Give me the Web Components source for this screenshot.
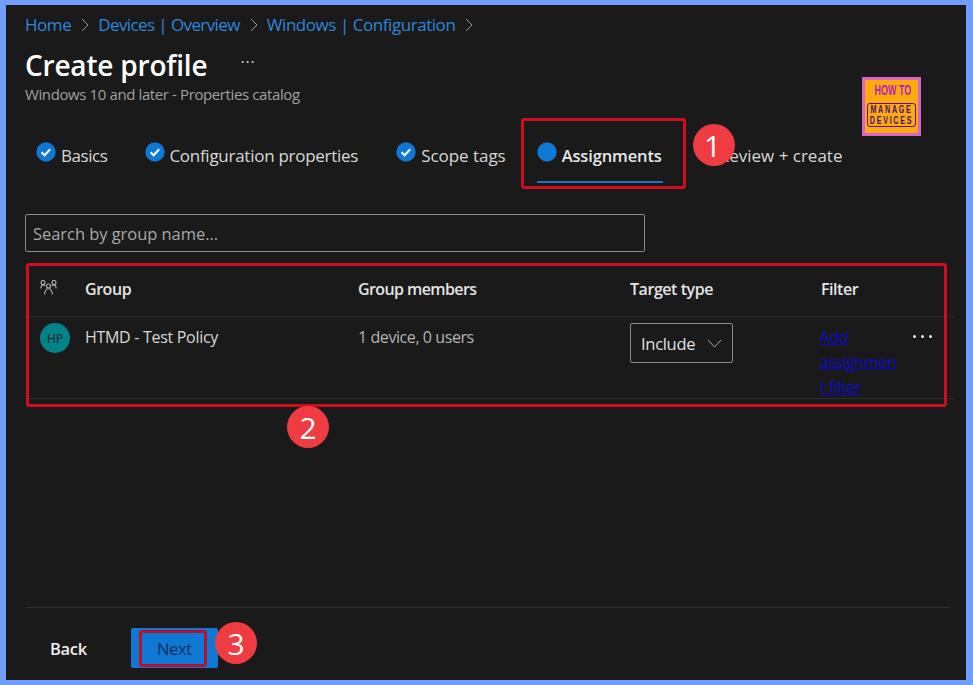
<!DOCTYPE html>
<html lang="en"><head><meta charset="utf-8"><title>Create profile</title>
<style>
html,body{margin:0;padding:0;height:100%}
body{background:#1a1a1a;font-family:"Open Sans","Noto Sans","Liberation Sans",sans-serif;overflow:hidden}
</style></head><body>
<app-frame>
  <crumb-bar></crumb-bar>
  <page-title title-text="Create profile" sub="Windows 10 and later - Properties catalog"></page-title>
  <wizard-tabs></wizard-tabs>
  <search-box placeholder="Search by group name..."></search-box>
  <assign-table></assign-table>
  <wizard-footer></wizard-footer>
  <brand-logo></brand-logo>
  <red-box style="left:521px;top:118px;width:165px;height:71px"></red-box>
  <red-box style="left:26px;top:263px;width:921px;height:144px"></red-box>
  <red-box style="left:139px;top:630px;width:68px;height:37px;border-color:#b4122f"></red-box>
  <step-badge style="left:693px;top:124px;padding-right:3px">1</step-badge>
  <step-badge style="left:287px;top:406px">2</step-badge>
  <step-badge style="left:215px;top:622px">3</step-badge>
</app-frame>
<script>
const T=(html)=>{const t=document.createElement('template');t.innerHTML=html;return t};
const def=(name,html,init)=>{const t=T(html);customElements.define(name,class extends HTMLElement{
  constructor(){super();this.attachShadow({mode:'open'}).appendChild(t.content.cloneNode(true));}
  connectedCallback(){init&&init(this,this.shadowRoot)}
})};

def('app-frame',`<style>
:host{display:flex;flex-direction:column;box-sizing:border-box;width:973px;height:685px;position:relative;
 border:solid #719dff;border-width:5px 7px 5px 6px;background:#1a1a1a;color:#e6e6e6;overflow:hidden}
::slotted(red-box),::slotted(step-badge),::slotted(brand-logo){margin:-5px 0 0 -6px}
</style><slot></slot>`);

def('crumb-bar',`<style>
:host{display:flex;align-items:center;padding:7px 0 0 19px;height:24px;font-size:17px;letter-spacing:-.45px;color:#2f86dc}
svg{width:10px;height:14px;margin:1px 8px 0 9px;fill:none;stroke:#9a9a9a;stroke-width:1}
</style>
<span>Home</span><svg viewBox="0 0 10 14"><path d="M2 1l6 6-6 6"/></svg>
<span style="letter-spacing:-.6px">Devices | Overview</span><svg viewBox="0 0 10 14"><path d="M2 1l6 6-6 6"/></svg>
<span>Windows | Configuration</span><svg viewBox="0 0 10 14"><path d="M2 1l6 6-6 6"/></svg>`);

def('page-title',`<style>
:host{display:block;padding:6px 0 0 19px}
.h{display:flex;align-items:center;height:46px}
h1{margin:0;font-size:28px;font-weight:600;color:#fff;letter-spacing:-.2px;line-height:46px}
.m{margin:-6px 0 0 33px;font-size:16px;color:#d0d0d0;letter-spacing:.8px}
p{margin:-3px 0 0;font-size:15px;line-height:18px;color:#a0a0a0;letter-spacing:-.39px}
</style><div class="h"><h1></h1><span class="m">···</span></div><p></p>`,(el,s)=>{
  s.querySelector('h1').textContent=el.getAttribute('title-text');
  s.querySelector('p').textContent=el.getAttribute('sub');
});

def('wizard-step',`<style>
:host{display:flex;align-items:center;height:71px;position:relative;font-size:17px;letter-spacing:-.45px;color:#d8d8d8}
:host([active]) {font-weight:600;color:#e8e8e8;font-size:16.500px;letter-spacing:-.13px}
.u{display:none}
:host([active]) .u{display:block;position:absolute;left:0;right:-1px;bottom:8px;height:2px;background:#1479c9}
</style><span class="i"></span><span><slot></slot></span><span class="u"></span>`,(el,s)=>{
  const a=el.hasAttribute('active');
  s.querySelector('.i').innerHTML=`<svg viewBox="0 0 20 20" style="display:block;width:20px;height:20px;margin:-7px 5px 0 0"><circle cx="10" cy="10" r="9.700" fill="#0f78d4"/>${a?'':'<path d="M5.600 10.200l3 3 5.600-6" fill="none" stroke="#fff" stroke-width="2"/>'}</svg>`;
});

def('wizard-tabs',`<style>
:host{display:flex;gap:38px;padding:0 0 0 30px;margin-top:17px;height:71px}
</style>
<wizard-step>Basics</wizard-step>
<wizard-step class="c" style="letter-spacing:-.27px">Configuration properties</wizard-step>
<wizard-step style="letter-spacing:-.05px">Scope tags</wizard-step>
<wizard-step active style="margin-left:-7px">Assignments</wizard-step>
<wizard-step style="margin-left:-6px;letter-spacing:0" class="r">Review + create</wizard-step>`,(el,s)=>{
  customElements.whenDefined('wizard-step').then(()=>{
    s.querySelector('.r').shadowRoot.querySelector('.i').style.visibility='hidden';
    s.querySelector('.c').shadowRoot.querySelector('svg').style.marginRight='4px';
  });
});

def('search-box',`<style>
:host{display:flex;align-items:center;box-sizing:border-box;width:620px;height:38px;margin:23px 0 0 19px;
 border:1px solid #8a8a8a;border-radius:2px;padding:0 7px;font-size:16.500px;letter-spacing:-.05px;color:#a8a8a8}
</style><span></span>`,(el,s)=>{s.querySelector('span').textContent=el.getAttribute('placeholder')});

def('assign-table',`<style>
:host{display:block;margin:10px 0 0 19px;width:930px;font-size:16px;letter-spacing:-.3px;color:#d8d8d8}
.g{display:grid;grid-template-columns:45px 273px 272px 191px 92px 1fr;padding-left:15px;box-sizing:border-box}
.hd{height:55px;align-items:center;border-bottom:1px solid #2a2a2a;font-weight:600;color:#e4e4e4;letter-spacing:-.45px}
.rw{height:82px;border-bottom:1px solid #2e2e2e;align-items:start}
.rw>*{margin-top:9px}
.rw>.av{width:30px;height:30px;border-radius:50%;background:#038387;color:#123;display:flex;align-items:center;justify-content:center;font-size:12px;letter-spacing:0;margin-top:6px}
.rw>.sel{display:flex;align-items:center;justify-content:space-between;box-sizing:border-box;width:103px;height:40px;border:1px solid #8a8a8a;border-radius:2px;padding:0 10px;font-size:16.500px;margin-top:6px;color:#e0e0e0}
.sel svg{width:15px;height:9px;fill:none;stroke:#aaa;stroke-width:1}
.rw>a{display:block;color:#0a0ac4;text-decoration:underline;line-height:25px;width:78px;overflow-wrap:break-word;margin:8px 0 0 -1px;letter-spacing:-.45px}
.rw>.dots{display:flex;gap:5px;margin:18px 0 0 0}
.dots i{width:3px;height:3px;border-radius:50%;background:#eee}
.ic{width:17px;height:15px;margin:-4px 0 0 0;fill:none;stroke:#b0b0b0;stroke-width:1.100}
</style>
<div class="g hd">
  <svg class="ic" viewBox="0 0 17 15"><circle cx="3" cy="2.500" r="2"/><circle cx="14" cy="2.500" r="2"/><circle cx="8.500" cy="6" r="2"/><path d="M.8 8.500c.2-2 1-3.500 2.200-3.500 .8 0 1.500.4 2.300 1M16.200 8.500c-.2-2-1-3.500-2.200-3.500-.8 0-1.500.4-2.300 1M4.500 14.500c.5-3 2-6 4-6s3.500 3 4 6"/></svg>
  <span>Group</span><span style="letter-spacing:-.6px">Group members</span><span>Target type</span><span>Filter</span><span></span>
</div>
<div class="g rw">
  <div class="av">HP</div>
  <span>HTMD - Test Policy</span>
  <span style="color:#b4b4b4;letter-spacing:-.42px">1 device, 0 users</span>
  <div class="sel"><span>Include</span><svg viewBox="0 0 15 9"><path d="M1 1l6.500 7L14 1"/></svg></div>
  <a href="#">Add assignment filter</a>
  <div class="dots"><i></i><i></i><i></i></div>
</div>`);

def('wizard-footer',`<style>
:host{display:flex;align-items:center;margin:auto 0 0 19px;width:925px;height:73px;padding-top:8px;box-sizing:border-box;border-top:1px solid #2e2e2e;font-size:16.500px;letter-spacing:-.3px}
.b{margin-left:25px;color:#eee;font-weight:600}
.n{margin-left:44px;width:87px;height:40px;display:flex;align-items:center;justify-content:center;background:#0f78d4;border-radius:2px;color:#10305a;font-weight:500}
</style><span class="b">Back</span><span class="n">Next</span>`);

def('brand-logo',`<style>
:host{position:absolute;left:862px;top:77px;width:59px;height:59px;box-sizing:border-box;border:3px solid #d565c8;background:#fdaa0f;
 font-family:"Liberation Sans",sans-serif;font-weight:700;text-align:center;overflow:hidden}
.a{font-size:14px;line-height:15px;color:#b41ebc;margin-top:3px;transform:scaleX(.64);white-space:nowrap}
.b{margin:5px 2px 0;border:1px solid #5b1080;border-radius:3px;color:#4a1078;font-size:11.500px;line-height:11px;height:24px;box-sizing:border-box;white-space:nowrap;overflow:hidden}
.b span{display:flex;justify-content:center;letter-spacing:2.800px;transform:scaleX(.62);transform-origin:center}
</style><div class="a">HOW TO</div><div class="b"><span>MANAGE</span><span>DEVICES</span></div>`);

def('red-box',`<style>
:host{position:absolute;box-sizing:border-box;border:3px solid #d00d1c;border-radius:3px}
</style>`);

def('step-badge',`<style>
:host{position:absolute;box-sizing:border-box;width:42px;height:42px;border-radius:50%;background:#ee3c42;color:#fff;display:flex;align-items:center;justify-content:center;font:500 30px "Open Sans",sans-serif}
</style><slot></slot>`);
</script>
</body></html>
